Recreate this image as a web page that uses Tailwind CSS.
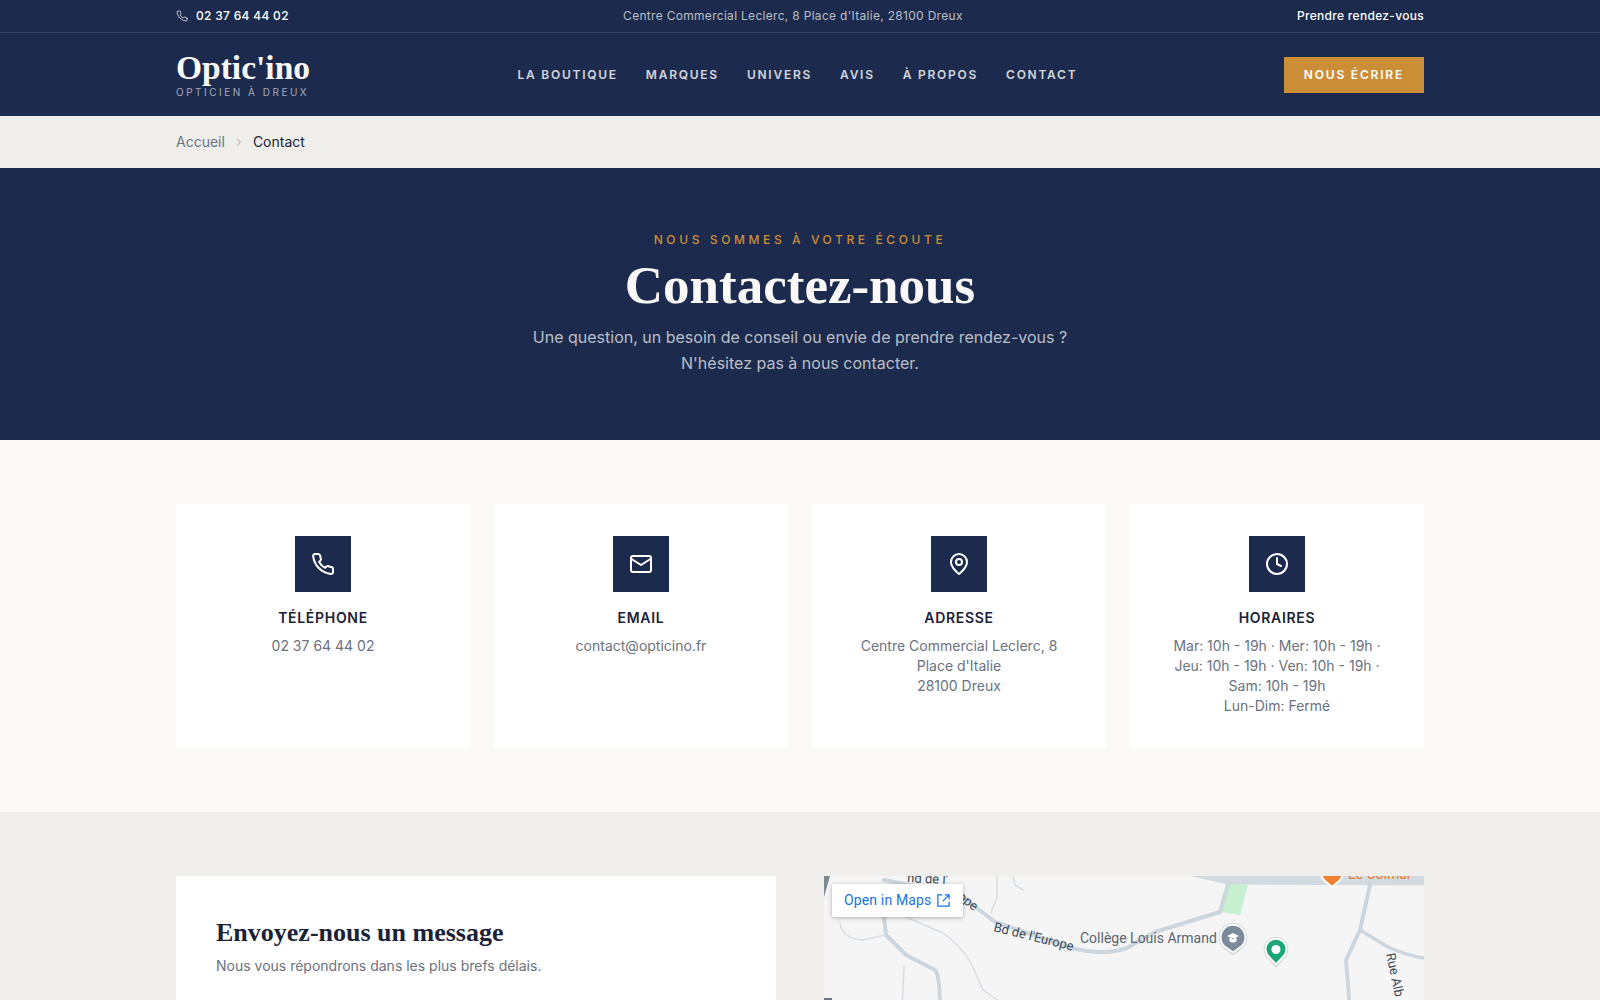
<!DOCTYPE html>
<html lang="fr">
<head>
<meta charset="utf-8">
<title>Contact</title>
<script src="https://cdn.jsdelivr.net/npm/@tailwindcss/browser@4"></script>
</head>
<body class="font-['Inter',sans-serif] bg-[#efeeeb] text-[#1a2238]">
<div class="h-[1000px] overflow-hidden">
  <div class="bg-[#1c2b4d] h-[33px] border-b border-white/10">
    <div class="mx-auto w-[1248px] h-[32px] flex justify-between items-center text-xs tracking-[0.025em]">
      <div class="flex items-center gap-2 text-white">
        <svg class="w-3 h-3 text-white/80" viewBox="0 0 24 24" fill="none" stroke="currentColor" stroke-width="1.75" stroke-linecap="round" stroke-linejoin="round"><path d="M22 16.92v3a2 2 0 0 1-2.18 2 19.8 19.8 0 0 1-8.63-3.07 19.5 19.5 0 0 1-6-6 19.8 19.8 0 0 1-3.07-8.67A2 2 0 0 1 4.11 2h3a2 2 0 0 1 2 1.72c.13.96.36 1.9.7 2.81a2 2 0 0 1-.45 2.11L8.09 9.91a16 16 0 0 0 6 6l1.27-1.27a2 2 0 0 1 2.11-.45c.91.34 1.85.57 2.81.7A2 2 0 0 1 22 16.92z"/></svg>
        <span class="font-medium">02 37 64 44 02</span>
      </div>
      <div class="text-white/70 whitespace-nowrap">Centre Commercial Leclerc, 8 Place d'Italie, 28100 Dreux</div>
      <div class="text-white font-medium">Prendre rendez-vous</div>
    </div>
  </div>
  <header class="bg-[#1c2b4d] h-[83px]">
    <div class="mx-auto w-[1248px] h-full flex items-center justify-between">
      <div class="w-[134px] whitespace-nowrap">
        <div class="font-['Liberation_Serif',serif] font-bold text-[33.5px] leading-[34px] text-[#faf9f7] mt-[-1px] mb-[1px]">Optic'ino</div>
        <div class="text-[10px] leading-[12px] tracking-[0.25em] text-white/60 uppercase">Opticien à Dreux</div>
      </div>
      <nav class="flex gap-7 text-xs font-semibold uppercase tracking-[1.75px] text-white/80 ml-[1px]">
        <a>La Boutique</a><a>Marques</a><a>Univers</a><a>Avis</a><a>À Propos</a><a>Contact</a>
      </nav>
      <a class="bg-[#cb8d36] text-white text-xs font-semibold uppercase tracking-[0.15em] h-9 px-5 flex items-center">Nous écrire</a>
    </div>
  </header>
  <div class="bg-[#efeeeb] h-[52px]">
    <div class="mx-auto w-[1248px] h-full flex items-center gap-2 text-sm">
      <span class="text-[#6b7280]">Accueil</span>
      <svg class="w-3 h-3 text-[#9ca3af]" viewBox="0 0 24 24" fill="none" stroke="currentColor" stroke-width="2" stroke-linecap="round" stroke-linejoin="round"><path d="m9 18 6-6-6-6"/></svg>
      <span class="text-[#1a2238]">Contact</span>
    </div>
  </div>
  <section class="bg-[#1c2b4d] h-[272px] pt-16 text-center">
    <div class="text-xs leading-4 tracking-[0.3em] uppercase text-[#cb8d36] font-medium">Nous sommes à votre écoute</div>
    <h1 class="font-['Liberation_Serif',serif] font-bold text-[53px] leading-[56px] text-[#faf9f7] mt-[9px]">Contactez-nous</h1>
    <p class="mt-[11px] text-white/70 text-base leading-[26px]">Une question, un besoin de conseil ou envie de prendre rendez-vous ?<br>N'hésitez pas à nous contacter.</p>
  </section>
  <section class="bg-[#faf9f7] h-[372px] py-16">
    <div class="mx-auto w-[1248px] grid grid-cols-4 gap-6">
      <div class="bg-white h-[244px] p-8 text-center">
        <div class="w-14 h-14 mx-auto bg-[#1c2b4d] flex items-center justify-center text-white">
          <svg class="w-6 h-6" viewBox="0 0 24 24" fill="none" stroke="currentColor" stroke-width="2" stroke-linecap="round" stroke-linejoin="round"><path d="M22 16.92v3a2 2 0 0 1-2.18 2 19.8 19.8 0 0 1-8.63-3.07 19.5 19.5 0 0 1-6-6 19.8 19.8 0 0 1-3.07-8.67A2 2 0 0 1 4.11 2h3a2 2 0 0 1 2 1.72c.13.96.36 1.9.7 2.81a2 2 0 0 1-.45 2.11L8.09 9.91a16 16 0 0 0 6 6l1.27-1.27a2 2 0 0 1 2.11-.45c.91.34 1.85.57 2.81.7A2 2 0 0 1 22 16.92z"/></svg>
        </div>
        <h3 class="mt-4 text-sm leading-5 font-semibold uppercase tracking-[0.05em]">Téléphone</h3>
        <p class="mt-2 text-sm leading-5 text-[#6b7280]">02 37 64 44 02</p>
      </div>
      <div class="bg-white h-[244px] p-8 text-center">
        <div class="w-14 h-14 mx-auto bg-[#1c2b4d] flex items-center justify-center text-white">
          <svg class="w-6 h-6" viewBox="0 0 24 24" fill="none" stroke="currentColor" stroke-width="2" stroke-linecap="round" stroke-linejoin="round"><rect x="2" y="4" width="20" height="16" rx="2"/><path d="m2.500 7 9.500 6 9.500-6"/></svg>
        </div>
        <h3 class="mt-4 text-sm leading-5 font-semibold uppercase tracking-[0.05em]">Email</h3>
        <p class="mt-2 text-sm leading-5 text-[#6b7280]">contact@opticino.fr</p>
      </div>
      <div class="bg-white h-[244px] p-8 text-center">
        <div class="w-14 h-14 mx-auto bg-[#1c2b4d] flex items-center justify-center text-white">
          <svg class="w-6 h-6" viewBox="0 0 24 24" fill="none" stroke="currentColor" stroke-width="2" stroke-linecap="round" stroke-linejoin="round"><path d="M20 10c0 6-8 12-8 12s-8-6-8-12a8 8 0 0 1 16 0Z"/><circle cx="12" cy="10" r="3"/></svg>
        </div>
        <h3 class="mt-4 text-sm leading-5 font-semibold uppercase tracking-[0.05em]">Adresse</h3>
        <p class="mt-2 text-sm leading-5 text-[#6b7280]">Centre Commercial Leclerc, 8<br>Place d'Italie<br>28100 Dreux</p>
      </div>
      <div class="bg-white h-[244px] p-8 text-center">
        <div class="w-14 h-14 mx-auto bg-[#1c2b4d] flex items-center justify-center text-white">
          <svg class="w-6 h-6" viewBox="0 0 24 24" fill="none" stroke="currentColor" stroke-width="2" stroke-linecap="round" stroke-linejoin="round"><circle cx="12" cy="12" r="10"/><path d="M12 6v6l4 2"/></svg>
        </div>
        <h3 class="mt-4 text-sm leading-5 font-semibold uppercase tracking-[0.05em]">Horaires</h3>
        <p class="mt-2 text-sm leading-5 text-[#6b7280]">Mar: 10h - 19h · Mer: 10h - 19h ·<br>Jeu: 10h - 19h · Ven: 10h - 19h ·<br>Sam: 10h - 19h<br>Lun-Dim: Fermé</p>
      </div>
    </div>
  </section>
  <section class="bg-[#efeeeb] pt-16">
    <div class="mx-auto w-[1248px] grid grid-cols-2 gap-12">
      <div class="bg-white h-[500px] p-10">
        <h2 class="font-['Liberation_Serif',serif] font-bold text-[26px] leading-8 text-[#1a2238] mt-[1px]">Envoyez-nous un message</h2>
        <p class="mt-[7px] text-sm leading-5 text-[#6b7280]">Nous vous répondrons dans les plus brefs délais.</p>
      </div>
      <div class="relative h-[500px] overflow-hidden bg-[#f5f5f5]">
        <svg class="absolute inset-0 w-[600px] h-[500px] font-['Roboto',sans-serif]" viewBox="824 876 600 500" fill="none" stroke-linecap="round" stroke-linejoin="round">
          <path d="M1226 883L1248 885L1240 915L1222 912Z" fill="#c6f0d0"/>
          <path d="M1192 876L1228 884L1424 885L1424 876Z" fill="#d3dbe2" stroke="#d3dbe2"/>
          <path d="M1228 884L1220 912L1155 932L1127 948Q1105 956 1071 948L995 922L960 895L884 880" stroke="#ccd6de" stroke-width="4"/>
          <path d="M1370 885L1360 930L1346 960L1350 1010" stroke="#ccd6de" stroke-width="4"/>
          <path d="M1360 930L1388 947Q1405 955 1424 958" stroke="#ccd6de" stroke-width="3.500"/>
          <path d="M884 917L886 935L906 955L935 970Q940 975 940 1010" stroke="#ccd6de" stroke-width="4"/>
          <path d="M840 923Q842 938 862 940L886 935" stroke="#d7dee4" stroke-width="1.500"/>
          <path d="M906 917L943 933Q960 945 971 963L983 990L1000 1002" stroke="#d7dee4" stroke-width="1.500"/>
          <path d="M904 967L902 1010" stroke="#d7dee4" stroke-width="1.500"/>
          <path d="M997 877L997 897L991 913" stroke="#d7dee4" stroke-width="1.500"/>
          <path d="M1013 877L1015 885L1023 890" stroke="#d7dee4" stroke-width="1.500"/>
          <path d="M824 897L830 876L824 876Z" fill="#7c8a92"/>
          <path d="M824 998h8v4h-8z" fill="#6b7782"/>
          <text transform="translate(907 882) rotate(3)" font-size="13" fill="#3c4a58">nd de l'</text>
          <text transform="translate(957 898) rotate(38)" font-size="13" fill="#3c4a58">ope</text>
          <text transform="translate(993 931) rotate(14)" font-size="13" fill="#3c4a58">Bd de l'Europe</text>
          <text x="1080" y="943" font-size="14" fill="#5b6670">Collège Louis Armand</text>
          <text transform="translate(1386 954) rotate(78)" font-size="13" fill="#3c4a58">Rue Alb</text>
          <path d="M1233 953L1224 946a12.500 12.500 0 1 1 18 0Z" fill="#7c8b99" stroke="#c9ced3" stroke-width="3.500"/>
          <path d="M1233 952.500L1224 946a12.500 12.500 0 1 1 18 0Z" fill="#7c8b99" stroke="#fff" stroke-width="2"/>
          <path d="M1227 936l6-3 6 3-6 3zM1229.500 938v3.500q3.500 2 7 0v-3.500" fill="#fff"/>
          <path d="M1276 965L1269 957a10.500 10.500 0 1 1 14 0Z" fill="#1ca677" stroke="#c9ced3" stroke-width="3.500"/>
          <path d="M1276 964.500L1269 957a10.500 10.500 0 1 1 14 0Z" fill="#1ca677" stroke="#fff" stroke-width="2"/>
          <circle cx="1276" cy="949.500" r="4.500" fill="#fff"/>
          <path d="M1332 887l-7-6a11 11 0 1 1 14 0Z" fill="#f08030" stroke="#fff" stroke-width="2"/>
          <text x="1348" y="879" font-size="14" fill="#e8792b">Le Colmar</text>
        </svg>
        <a class="absolute left-2 top-2 w-[131px] h-[33px] bg-white rounded-[2px] shadow-[0_1px_4px_rgba(0,0,0,0.3)] flex items-center gap-[5px] pl-3 pb-[1px] font-['Roboto',sans-serif] text-sm tracking-[0.15px] text-[#1a73e8]">
          Open in Maps
          <svg class="w-[15px] h-[15px]" viewBox="0 0 24 24" fill="none" stroke="currentColor" stroke-width="2"><path d="M10 3H3v18h18v-7M14 3h7v7M21 3 11 13"/></svg>
        </a>
      </div>
    </div>
  </section>
</div>
</body>
</html>
